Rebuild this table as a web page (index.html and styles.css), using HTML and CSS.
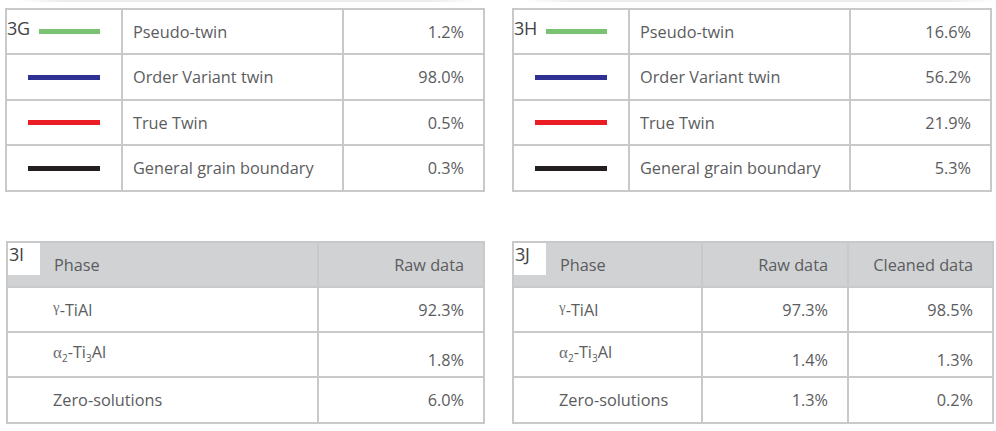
FILE: index.html
```html
<!DOCTYPE html>
<html lang="en">
<head>
<meta charset="utf-8">
<title>Boundary and phase fractions</title>
<link rel="stylesheet" href="styles.css">
</head>
<body>
<div class="page">
  <div class="fade"><span class="fade-a"></span><span class="fade-b"></span></div>
  <div class="grid">
    <table class="tbl tw">
      <colgroup><col class="c-key"><col class="c-name"><col class="c-val"></colgroup>
      <tr><td class="key"><div class="key-in"><span class="tag">3G</span><span class="line green short"></span></div></td><td class="name">Pseudo-twin</td><td class="val">1.2%</td></tr>
      <tr><td class="key"><div class="key-in"><span class="line blue"></span></div></td><td class="name">Order Variant twin</td><td class="val">98.0%</td></tr>
      <tr><td class="key"><div class="key-in"><span class="line red"></span></div></td><td class="name">True Twin</td><td class="val">0.5%</td></tr>
      <tr><td class="key"><div class="key-in"><span class="line black"></span></div></td><td class="name">General grain boundary</td><td class="val">0.3%</td></tr>
    </table>
    <table class="tbl tw">
      <colgroup><col class="c-key"><col class="c-name"><col class="c-val"></colgroup>
      <tr><td class="key"><div class="key-in"><span class="tag">3H</span><span class="line green short"></span></div></td><td class="name">Pseudo-twin</td><td class="val">16.6%</td></tr>
      <tr><td class="key"><div class="key-in"><span class="line blue"></span></div></td><td class="name">Order Variant twin</td><td class="val">56.2%</td></tr>
      <tr><td class="key"><div class="key-in"><span class="line red"></span></div></td><td class="name">True Twin</td><td class="val">21.9%</td></tr>
      <tr><td class="key"><div class="key-in"><span class="line black"></span></div></td><td class="name">General grain boundary</td><td class="val">5.3%</td></tr>
    </table>
    <table class="tbl ph ph2">
      <colgroup><col class="c-phase2"><col class="c-raw2"></colgroup>
      <tr class="head"><td class="phase-h"><div class="head-in"><span class="box-tag">3I</span><span class="head-txt">Phase</span></div></td><td class="val">Raw data</td></tr>
      <tr><td class="phase"><span class="gr gamma">&#947;</span>-TiAl</td><td class="val">92.3%</td></tr>
      <tr class="alpha-row"><td class="phase"><span class="gr alpha">&#945;</span><sub>2</sub>-Ti<sub>3</sub>Al</td><td class="val">1.8%</td></tr>
      <tr><td class="phase">Zero-solutions</td><td class="val">6.0%</td></tr>
    </table>
    <table class="tbl ph ph3">
      <colgroup><col class="c-phase3"><col class="c-raw3"><col class="c-clean3"></colgroup>
      <tr class="head"><td class="phase-h"><div class="head-in"><span class="box-tag">3J</span><span class="head-txt">Phase</span></div></td><td class="val">Raw data</td><td class="val">Cleaned data</td></tr>
      <tr><td class="phase"><span class="gr gamma">&#947;</span>-TiAl</td><td class="val">97.3%</td><td class="val">98.5%</td></tr>
      <tr class="alpha-row"><td class="phase"><span class="gr alpha">&#945;</span><sub>2</sub>-Ti<sub>3</sub>Al</td><td class="val">1.4%</td><td class="val">1.3%</td></tr>
      <tr><td class="phase">Zero-solutions</td><td class="val">1.3%</td><td class="val">0.2%</td></tr>
    </table>
  </div>
</div>
</body>
</html>
```
FILE: styles.css
```css
html, body {
  margin: 0;
  padding: 0;
  background: #ffffff;
}
body {
  font-family: "Open Sans", "Liberation Sans", sans-serif;
  font-size: 16.3px;
  color: #5b5c5e;
}
.page {
  padding: 0 0 0 5px;
}
.fade {
  display: flex;
  height: 2px;
  margin-bottom: 6px;
}
.fade-a, .fade-b {
  display: block;
  height: 2px;
  background: linear-gradient(90deg, rgba(235,235,237,0), #ececee 10%, #ececee 90%, rgba(235,235,237,0));
}
.fade-a { width: 460px; margin-left: 12px; }
.fade-b { width: 470px; margin-left: 48px; }
.grid {
  display: grid;
  grid-template-columns: 480px 482px;
  column-gap: 27px;
  row-gap: 49px;
  align-items: start;
}
.tbl {
  border-collapse: separate;
  border-spacing: 0;
  table-layout: fixed;
  border-top: 2px solid #c8c9cb;
  border-left: 2px solid #c8c9cb;
}
.tbl td {
  border-right: 2px solid #c8c9cb;
  border-bottom: 2px solid #c8c9cb;
  padding: 0;
  white-space: nowrap;
  line-height: 22px;
  vertical-align: middle;
}
.tw { width: 480px; }
.tw tr:nth-child(odd) td { height: 43px; }
.tw tr:nth-child(even) td { height: 44px; }
.c-key { width: 116px; }
.c-name { width: 221px; }
.c-val { width: 141px; }
.tbl .name { padding-left: 10px; }
.tbl .val {
  text-align: right;
  padding-right: 19px;
}
.key-in {
  display: flex;
  align-items: center;
  justify-content: flex-end;
  padding-right: 21px;
}
.tag {
  margin-right: auto;
  color: #434345;
  font-size: 18px;
  margin-bottom: 7px;
  letter-spacing: -0.3px;
}
.line {
  display: block;
  width: 72px;
  height: 5px;
}
.line.short { width: 61px; }
.green { background: #79c272; }
.blue { background: #2e3192; }
.red { background: #ec1c24; }
.black { background: #231f20; }

.ph tr td { height: 43px; }
.ph tr:last-child td { height: 44px; }
.ph2 { width: 479px; margin-left: 1px; }
.c-phase2 { width: 311px; }
.c-raw2 { width: 166px; }
.ph3 { width: 482px; }
.c-phase3 { width: 189px; }
.c-raw3 { width: 146px; }
.c-clean3 { width: 145px; }
.head td {
  background: #d1d2d4;
}
.tbl .phase-h { vertical-align: top; }
.head-in {
  display: flex;
  align-items: flex-start;
  height: 43px;
}
.box-tag {
  display: block;
  width: 31px;
  height: 32px;
  background: #ffffff;
  color: #434345;
  font-size: 18px;
  line-height: 22px;
  padding-left: 1px;
  letter-spacing: -0.3px;
}
.head-txt {
  align-self: center;
  margin-left: 14px;
}
.tbl .phase { padding-left: 45px; }
.gr {
  font-family: "Liberation Serif", "DejaVu Serif", serif;
  color: #6f6f72;
}
.gamma {
  font-size: 15px;
  vertical-align: 4px;
  line-height: 0;
}
.alpha { font-size: 17px; line-height: 0; }
.phase sub {
  font-size: 10px;
  vertical-align: -4px;
  line-height: 0;
}
.ph .alpha-row .phase {
  vertical-align: top;
  padding-top: 8px;
  height: 35px;
}
.ph .alpha-row .val {
  padding-top: 10px;
  height: 33px;
}
```
